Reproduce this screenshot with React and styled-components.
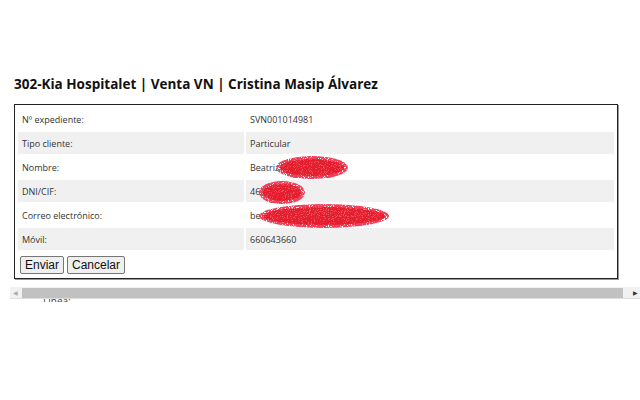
import React from 'react';
import styled, { createGlobalStyle } from 'styled-components';

const GlobalStyle = createGlobalStyle`
  html, body {
    margin: 0;
    padding: 0;
    background: #fff;
  }
`;

const Page = styled.div`
  width: 640px;
  height: 400px;
  overflow: hidden;
  font-family: "Open Sans", "Noto Sans", sans-serif;
  color: #222;
`;

const Title = styled.h2`
  margin: 0;
  padding: 74px 0 0 14px;
  font-size: 13.5px;
  font-weight: 700;
  color: #111;
  line-height: 20px;
`;

const Panel = styled.div`
  margin: 10px 22px 0 14px;
  border: 1px solid #222;
  box-shadow: 1px 1px 0 #999;
  padding: 1px 1px 4px 1px;
`;

const Table = styled.table`
  width: 100%;
  border-spacing: 2px;
  font-size: 9px;
  color: #333;
`;

const Row = styled.tr`
  background: ${(p) => (p.$alt ? '#f0f0f0' : '#fff')};
  height: 22px;
`;

const Label = styled.td`
  width: 222px;
  padding: 0 0 0 4px;
`;

const Value = styled.td`
  padding: 0 0 0 4px;
  position: relative;
`;

const Actions = styled.div`
  display: flex;
  gap: 3px;
  padding: 4px 0 0 4px;
`;

const Button = styled.button`
  font-family: "Liberation Sans", Arial, sans-serif;
  font-size: 12px;
  color: #111;
  height: 18px;
  padding: 0 4px;
  border: 1px solid #767676;
  border-radius: 2px;
  background: #efefef;
`;

const Scribble = styled.svg`
  position: absolute;
  left: ${(p) => p.$left}px;
  top: ${(p) => p.$top}px;
`;

const ScrollBar = styled.div`
  margin: 8px 0 0 10px;
  width: 630px;
  height: 11px;
  display: flex;
  align-items: center;
  background: #f1f1f1;
  border-bottom: 1px solid #ddd;
`;

const Arrow = styled.span`
  width: 10px;
  font-size: 6px;
  color: ${(p) => (p.$dim ? '#aaa' : '#333')};
  text-align: center;
  line-height: 10px;
`;

const Thumb = styled.div`
  flex: 1;
  height: 10px;
  margin: 0 7px 0 2px;
  background: #c1c1c1;
`;

const Clipped = styled.div`
  height: 3px;
  overflow: hidden;
  padding-left: 43px;
  font-size: 10px;
  line-height: 4px;
  color: #444;
`;

function Redact({ left, top, width, height, seed }) {
  const id = `noise${seed}`;
  return (
    <Scribble $left={left} $top={top} width={width} height={height} viewBox={`0 0 ${width} ${height}`}>
      <defs>
        <filter id={id} x="0" y="0" width="100%" height="100%">
          <feTurbulence type="fractalNoise" baseFrequency="0.95" numOctaves="2" seed={seed} result="n" />
          <feColorMatrix
            in="n"
            type="matrix"
            values="0 0 0 0 0.88  0 0 0 0 0.05  0 0 0 0 0.1  0 0 0 9 -2.9"
            result="dots"
          />
          <feComposite in="dots" in2="SourceGraphic" operator="in" />
        </filter>
      </defs>
      <g filter={`url(#${id})`}>
        <ellipse cx={width / 2} cy={height / 2} rx={width / 2} ry={height / 2} fill="#e00" />
      </g>
      <ellipse cx={width / 2} cy={height / 2} rx={width / 2 - 4} ry={height / 2 - 3} fill="#e0101c" opacity="0.7" />
    </Scribble>
  );
}

const rows = [
  { label: 'Nº expediente:', value: 'SVN001014981' },
  { label: 'Tipo cliente:', value: 'Particular' },
  { label: 'Nombre:', value: 'Beatriz', redact: { left: 30, top: 0, width: 72, height: 23 } },
  { label: 'DNI/CIF:', value: '469', redact: { left: 13, top: 1, width: 46, height: 23 } },
  { label: 'Correo electrónico:', value: 'be', redact: { left: 13, top: 0, width: 130, height: 24 } },
  { label: 'Móvil:', value: '660643660' },
];

export default function App() {
  return (
    <Page>
      <GlobalStyle />
      <Title>302-Kia Hospitalet | Venta VN | Cristina Masip Álvarez</Title>
      <Panel>
        <Table>
          <tbody>
            {rows.map((r, i) => (
              <Row key={r.label} $alt={i % 2 === 1}>
                <Label>{r.label}</Label>
                <Value>
                  {r.value}
                  {r.redact && <Redact {...r.redact} seed={i + 3} />}
                </Value>
              </Row>
            ))}
          </tbody>
        </Table>
        <Actions>
          <Button>Enviar</Button>
          <Button>Cancelar</Button>
        </Actions>
      </Panel>
      <ScrollBar>
        <Arrow $dim>◀</Arrow>
        <Thumb />
        <Arrow>▶</Arrow>
      </ScrollBar>
      <Clipped>Línea:</Clipped>
    </Page>
  );
}
